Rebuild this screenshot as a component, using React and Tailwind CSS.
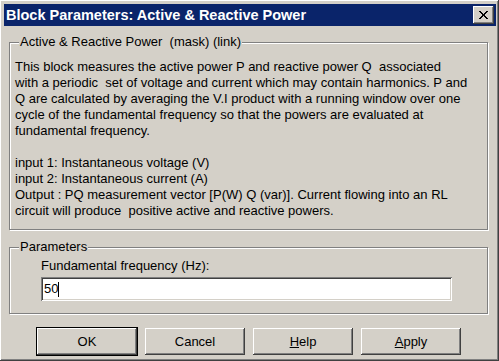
import React from 'react';

const raised =
  'shadow-[inset_-1px_-1px_0_#404040,inset_1px_1px_0_#ffffff,inset_-2px_-2px_0_#808080,inset_2px_2px_0_#d4d0c8]';

const GroupBox = ({ label, className, children }) => (
  <div
    className={`relative border border-[#808080] shadow-[inset_1px_1px_0_#ffffff,1px_1px_0_#ffffff] ${className}`}
  >
    <span className="absolute -top-[9px] left-[9px] bg-[#d4d0c8] px-[1px] leading-4 whitespace-pre">{label}</span>
    {children}
  </div>
);

const Button = ({ children, primary }) => (
  <button
    className={`w-[100px] h-[27px] bg-[#d4d0c8] text-black text-[13px] leading-4 ${raised} ${
      primary ? 'outline outline-1 outline-black' : ''
    }`}
  >
    {children}
  </button>
);

const description = [
  'This block measures the active power P and reactive power Q  associated',
  'with a periodic  set of voltage and current which may contain harmonics. P and',
  'Q are calculated by averaging the V.I product with a running window over one',
  'cycle of the fundamental frequency so that the powers are evaluated at',
  'fundamental frequency.',
  '\u00a0',
  'input 1: Instantaneous voltage (V)',
  'input 2: Instantaneous current (A)',
  'Output : PQ measurement vector [P(W) Q (var)]. Current flowing into an RL',
  'circuit will produce  positive active and reactive powers.',
];

export default function App() {
  return (
    <div
      className={`w-[499px] h-[361px] bg-[#d4d0c8] pt-[4px] pl-[4px] pr-[3px] text-[13px] text-black ${raised}`}
      style={{ fontFamily: '"Liberation Sans", Arial, sans-serif' }}
    >
      {/* title bar */}
      <div className="h-[22px] bg-[#0a246a] flex items-center justify-between pl-[2px] pr-[2px]">
        <span className="text-white font-bold text-[14.5px] leading-none">
          Block Parameters: Active &amp; Reactive Power
        </span>
        <div className={`w-[21px] h-[18px] bg-[#d4d0c8] flex items-center justify-center ${raised}`}>
          <svg width="9" height="8" viewBox="0 0 9 8" shapeRendering="crispEdges">
            <path d="M0 0h2v1h1v1h1v1h1V2h1V1h1V0h2v1H8v1H7v1H6v2h1v1h1v1h1v1H7V7H6V6H5V5H4v1H3v1H2v1H0V7h1V6h1V5h1V3H2V2H1V1H0z" fill="#000" />
          </svg>
        </div>
      </div>

      <GroupBox label="Active & Reactive Power  (mask) (link)" className="mt-[16px] ml-[5px] w-[479px] h-[188px]">
        <div className="pt-[16px] pl-[5px] leading-4 whitespace-pre">
          {description.map((line, i) => (
            <div key={i}>{line}</div>
          ))}
        </div>
      </GroupBox>

      <GroupBox label="Parameters" className="mt-[17px] ml-[5px] w-[479px] h-[67px]">
        <div className="pt-[10px] pl-[31px] leading-4">Fundamental frequency (Hz):</div>
        <div className="mt-[3px] ml-[31px] w-[411px] h-[24px] bg-white shadow-[inset_1px_1px_0_#808080,inset_-1px_-1px_0_#ffffff,inset_2px_2px_0_#404040,inset_-2px_-2px_0_#d4d0c8] flex items-center pl-[3px]">
          <span className="leading-4">50</span>
          <span className="w-[1px] h-[15px] bg-black" />
        </div>
      </GroupBox>

      <div className="mt-[14px] ml-[33px] flex gap-[8px]">
        <Button primary>OK</Button>
        <Button>Cancel</Button>
        <Button>
          <span className="underline">H</span>elp
        </Button>
        <Button>
          <span className="underline">A</span>pply
        </Button>
      </div>
    </div>
  );
}
